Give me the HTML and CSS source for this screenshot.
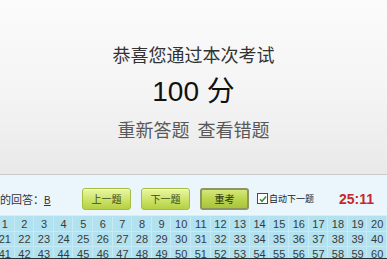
FILE: index.html
```html
<!DOCTYPE html>
<html lang="zh-CN">
<head>
<meta charset="utf-8">
<title>考试结果</title>
<link rel="stylesheet" href="styles.css">
</head>
<body>
<div class="page">
  <section class="result">
    <div class="title">恭喜您通过本次考试</div>
    <div class="score"><span class="num">100</span> 分</div>
    <div class="links"><span>重新答题</span><span>查看错题</span></div>
  </section>
  <section class="toolbar">
    <div class="answer">您的回答：<u>B</u></div>
    <button class="btn">上一题</button>
    <button class="btn">下一题</button>
    <button class="btn btn-active">重考</button>
    <label class="auto"><span class="check"><svg width="8" height="8" viewBox="0 0 8 8"><path d="M1 4.2 L3 6.3 L7 1.5" fill="none" stroke="#3a8f3a" stroke-width="1.5"/></svg></span>自动下一题</label>
    <div class="timer">25:11</div>
  </section>
  <section class="grid" id="grid"></section>
  <div class="bottom-line"></div>
</div>
<script>
  var g = document.getElementById('grid');
  for (var i = 1; i <= 60; i++) {
    var c = document.createElement('div');
    c.className = 'cell';
    c.textContent = i;
    g.appendChild(c);
  }
</script>
</body>
</html>
```
FILE: styles.css
```css
html, body {
  margin: 0;
  padding: 0;
}
body {
  width: 387px;
  height: 259px;
  overflow: hidden;
  background: #ffffff;
  font-family: "Noto Sans CJK SC", "Liberation Sans", sans-serif;
}
.page {
  width: 387px;
  height: 259px;
  overflow: hidden;
  display: flex;
  flex-direction: column;
}
.result {
  height: 175px;
  flex: 0 0 175px;
  box-sizing: border-box;
  border-bottom: 1px solid #cbcbcb;
  background: linear-gradient(#fbfbfb, #f4f4f4 55%, #e9e9e9);
  display: flex;
  flex-direction: column;
  align-items: center;
  padding-top: 45px;
}
.title {
  font-size: 18px;
  line-height: 18px;
  color: #333;
}
.score {
  margin-top: 15px;
  font-size: 28px;
  line-height: 28px;
  color: #111;
  font-family: "Liberation Sans", "Noto Sans CJK SC", sans-serif;
}
.score .num {
  font-family: "Liberation Sans", sans-serif;
}
.links {
  margin-top: 14px;
  font-size: 18px;
  line-height: 18px;
  color: #585858;
  display: flex;
  gap: 8px;
}
.toolbar {
  height: 41px;
  flex: 0 0 41px;
  box-sizing: border-box;
  padding-top: 7px;
  background: #eaf6fb;
  border-bottom: 1px solid #d8eef6;
  display: flex;
  align-items: center;
}
.answer {
  flex: 0 0 93px;
  margin-left: -11px;
  font-size: 11px;
  color: #333;
  white-space: nowrap;
}
.answer u {
  font-family: "Liberation Sans", sans-serif;
  font-size: 10px;
}
.btn {
  width: 49px;
  height: 22px;
  margin: 0 10px 0 0;
  padding: 0;
  border: 1px solid #a3bd3e;
  border-radius: 3px;
  background: linear-gradient(#eaf7a4, #cfe56c 50%, #b4d043);
  box-shadow: inset 0 1px 0 rgba(255,255,255,0.6);
  font-family: "Noto Sans CJK SC", sans-serif;
  font-size: 10px;
  color: #3b4a1c;
}
.btn-active {
  border: 2px solid #8b9660;
  background: linear-gradient(#d4e77c, #bcd54e 50%, #a9c43c);
  box-shadow: none;
  color: #2b3510;
  margin-right: 8px;
}
.auto {
  display: flex;
  align-items: center;
  font-size: 9px;
  color: #222;
  white-space: nowrap;
}
.check {
  width: 9px;
  height: 9px;
  border: 1px solid #4a4a4a;
  background: #fff;
  margin-right: 1px;
  display: flex;
  align-items: center;
  justify-content: center;
}
.timer {
  margin-left: auto;
  margin-right: 13px;
  font-family: "Liberation Sans", sans-serif;
  font-weight: bold;
  font-size: 14px;
  color: #c4282e;
}
.grid {
  height: 42px;
  flex: 0 0 42px;
  box-sizing: border-box;
  overflow: hidden;
  margin-left: -5px;
  width: 392px;
  padding-top: 1px;
  background: #b2e1f0;
  display: grid;
  grid-template-columns: repeat(20, 1fr);
  grid-auto-rows: 15px;
}
.cell {
  font-family: "Liberation Sans", sans-serif;
  font-size: 11px;
  line-height: 15px;
  text-align: center;
  color: #3a3a3a;
  box-shadow: inset -1px -1px 0 #c6eaf6;
}
.bottom-line {
  height: 1px;
  flex: 0 0 1px;
  background: #2a2f30;
}
```
